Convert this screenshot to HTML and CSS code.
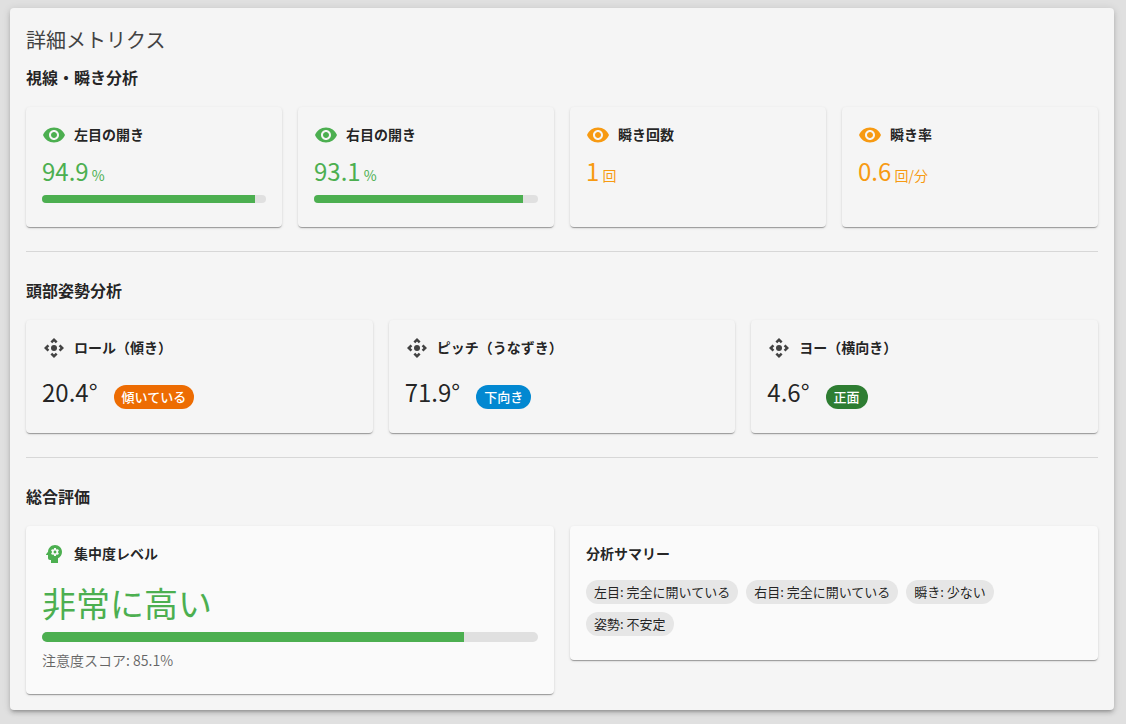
FILE: index.html
```html
<!DOCTYPE html>
<html lang="ja">
<head>
<meta charset="utf-8">
<meta name="viewport" content="width=device-width, initial-scale=1">
<title>詳細メトリクス</title>
<link rel="stylesheet" href="styles.css">
</head>
<body>
<svg class="sprite" aria-hidden="true">
  <symbol id="icon-eye" viewBox="0 0 24 24"><path d="M12 4.500C7 4.500 2.730 7.610 1 12c1.730 4.390 6 7.500 11 7.500s9.270-3.110 11-7.500c-1.730-4.390-6-7.500-11-7.500M12 17c-2.760 0-5-2.240-5-5s2.240-5 5-5 5 2.240 5 5-2.240 5-5 5m0-8c-1.660 0-3 1.340-3 3s1.340 3 3 3 3-1.340 3-3-1.340-3-3-3"/></symbol>
  <symbol id="icon-move" viewBox="0 0 24 24"><path d="M15.540 5.540 13.770 7.300 12 5.540 10.230 7.300 8.460 5.540 12 2zm2.920 10-1.760-1.770L18.460 12l-1.760-1.770 1.760-1.770L22 12zm-10 2.920 1.770-1.760L12 18.460l1.770-1.760 1.770 1.760L12 22zm-2.920-10 1.760 1.770L5.540 12l1.760 1.770-1.760 1.770L2 12z"/><circle cx="12" cy="12" r="3"/></symbol>
  <symbol id="icon-mind" viewBox="0 0 24 24"><path d="M13 8.570c-.79 0-1.430.64-1.430 1.430s.64 1.430 1.430 1.430 1.430-.64 1.430-1.430-.64-1.430-1.430-1.430"/><path d="M13 3C9.250 3 6.200 5.940 6.020 9.640L4.100 12.200c-.25.33-.01.8.4.8H6v3c0 1.100.9 2 2 2h1v3h7v-4.680c2.360-1.120 4-3.530 4-6.320 0-3.870-3.130-7-7-7m3 7c0 .13-.01.26-.02.39l.83.66c.08.06.1.16.05.25l-.8 1.390c-.05.09-.16.12-.24.09l-.99-.4c-.21.16-.43.29-.67.39L14 13.830c-.01.1-.1.17-.2.17h-1.600c-.1 0-.18-.07-.2-.17l-.15-1.060c-.25-.1-.47-.23-.68-.39l-.99.4c-.09.03-.2 0-.25-.09l-.8-1.390c-.05-.08-.03-.19.05-.25l.84-.66c-.01-.13-.02-.26-.02-.39s.02-.27.04-.39l-.85-.66c-.08-.06-.1-.16-.05-.26l.8-1.380c.05-.09.15-.12.24-.09l1 .4c.2-.15.43-.29.67-.39l.15-1.060C12.020 6.070 12.100 6 12.200 6h1.600c.1 0 .18.07.2.17l.15 1.060c.24.1.46.23.67.39l1-.4c.09-.03.2 0 .24.09l.8 1.380c.05.09.03.2-.05.26l-.85.66c.03.12.04.25.04.39"/></symbol>
</svg>
<main class="panel">
  <h1 class="panel-title">詳細メトリクス</h1>

  <section class="section">
    <h2 class="section-title">視線・瞬き分析</h2>
    <div class="grid grid-four">
      <article class="card good">
        <h3 class="card-title"><svg class="icon"><use href="#icon-eye"/></svg>左目の開き</h3>
        <p class="value">94.9<span class="unit"> %</span></p>
        <div class="bar" role="progressbar" aria-label="左目の開き" aria-valuenow="94.9"><div class="bar-fill" style="width:94.9%"></div></div>
      </article>
      <article class="card good">
        <h3 class="card-title"><svg class="icon"><use href="#icon-eye"/></svg>右目の開き</h3>
        <p class="value">93.1<span class="unit"> %</span></p>
        <div class="bar" role="progressbar" aria-label="右目の開き" aria-valuenow="93.1"><div class="bar-fill" style="width:93.1%"></div></div>
      </article>
      <article class="card warn">
        <h3 class="card-title"><svg class="icon"><use href="#icon-eye"/></svg>瞬き回数</h3>
        <p class="value">1<span class="unit"> 回</span></p>
      </article>
      <article class="card warn">
        <h3 class="card-title"><svg class="icon"><use href="#icon-eye"/></svg>瞬き率</h3>
        <p class="value">0.6<span class="unit"> 回/分</span></p>
      </article>
    </div>
  </section>

  <hr class="divider">

  <section class="section">
    <h2 class="section-title">頭部姿勢分析</h2>
    <div class="grid grid-three">
      <article class="card">
        <h3 class="card-title"><svg class="icon"><use href="#icon-move"/></svg>ロール（傾き）</h3>
        <div class="angle"><p class="angle-value">20.4°</p><span class="chip chip-orange">傾いている</span></div>
      </article>
      <article class="card">
        <h3 class="card-title"><svg class="icon"><use href="#icon-move"/></svg>ピッチ（うなずき）</h3>
        <div class="angle"><p class="angle-value">71.9°</p><span class="chip chip-blue">下向き</span></div>
      </article>
      <article class="card">
        <h3 class="card-title"><svg class="icon"><use href="#icon-move"/></svg>ヨー（横向き）</h3>
        <div class="angle"><p class="angle-value">4.6°</p><span class="chip chip-green">正面</span></div>
      </article>
    </div>
  </section>

  <hr class="divider">

  <section class="section">
    <h2 class="section-title">総合評価</h2>
    <div class="grid grid-two">
      <article class="card card-light good">
        <h3 class="card-title"><svg class="icon"><use href="#icon-mind"/></svg>集中度レベル</h3>
        <p class="level">非常に高い</p>
        <div class="bar bar-thick" role="progressbar" aria-label="集中度レベル" aria-valuenow="85.1"><div class="bar-fill" style="width:85.1%"></div></div>
        <p class="score">注意度スコア: 85.1%</p>
      </article>
      <article class="card card-light">
        <h3 class="summary-title">分析サマリー</h3>
        <ul class="chips">
          <li class="chip">左目: 完全に開いている</li>
          <li class="chip">右目: 完全に開いている</li>
          <li class="chip">瞬き: 少ない</li>
          <li class="chip">姿勢: 不安定</li>
        </ul>
      </article>
    </div>
  </section>
</main>
</body>
</html>
```
FILE: styles.css
```css
* {
  box-sizing: border-box;
}

body {
  margin: 0;
  padding: 8px 12px 14px 10px;
  background: #e0e0e0;
  color: rgba(0, 0, 0, 0.87);
  font-family: "Noto Sans CJK JP", sans-serif;
  font-size: 14px;
}

h1, h2, h3, p, ul {
  margin: 0;
  padding: 0;
}

.sprite {
  display: none;
}

.panel {
  padding: 16px;
  border-radius: 4px;
  background: #f5f5f5;
  box-shadow: 0 3px 3px -2px rgba(0, 0, 0, 0.2), 0 3px 4px rgba(0, 0, 0, 0.14), 0 1px 8px rgba(0, 0, 0, 0.12);
}

.panel-title {
  margin-bottom: 7px;
  color: #424242;
  font-size: 20px;
  font-weight: 400;
  line-height: 32px;
}

.section-title {
  margin-bottom: 16px;
  font-size: 16px;
  font-weight: 700;
  line-height: 28px;
}

.divider {
  height: 1px;
  margin: 24px 0;
  border: 0;
  background: rgba(0, 0, 0, 0.12);
}

.grid {
  display: grid;
  gap: 16px;
}

.grid-four {
  grid-template-columns: repeat(4, 1fr);
}

.grid-three {
  grid-template-columns: repeat(3, 1fr);
}

.grid-two {
  grid-template-columns: repeat(2, 1fr);
  align-items: start;
}

.card {
  padding: 16px 16px 24px;
  border-radius: 4px;
  background: #f5f5f5;
  box-shadow: 0 2px 1px -1px rgba(0, 0, 0, 0.2), 0 1px 1px rgba(0, 0, 0, 0.14), 0 1px 3px rgba(0, 0, 0, 0.12);
}

.card-light {
  background: #fafafa;
}

.good {
  --accent: #4caf50;
}

.warn {
  --accent: #f79a12;
}

.card-title {
  display: flex;
  align-items: flex-start;
  gap: 8px;
  font-size: 14px;
  font-weight: 700;
  line-height: 22px;
}

.icon {
  width: 24px;
  height: 24px;
  fill: var(--accent, #424242);
}

.value {
  margin: 8px 0;
  color: var(--accent);
  font-size: 24px;
  line-height: 32px;
}

.unit {
  font-size: 14px;
  line-height: 20px;
}

.bar {
  height: 8px;
  overflow: hidden;
  border-radius: 4px;
  background: #e0e0e0;
}

.bar-thick {
  height: 10px;
  border-radius: 5px;
}

.bar-fill {
  height: 100%;
  background: #4caf50;
}

.angle {
  display: flex;
  align-items: flex-end;
  gap: 16px;
  margin-top: 16px;
}

.angle-value {
  padding-bottom: 1px;
  font-size: 24px;
  line-height: 32px;
}

.chip {
  padding: 0 8px;
  border-radius: 12px;
  background: #e6e6e6;
  font-size: 13px;
  line-height: 24px;
}

.chip-orange,
.chip-blue,
.chip-green {
  color: #fff;
  font-weight: 500;
}

.chip-orange {
  background: #ed6c02;
}

.chip-blue {
  background: #0288d1;
}

.chip-green {
  background: #2e7d32;
}

.level {
  margin: 16px 0 8px;
  color: var(--accent);
  font-size: 34px;
  line-height: 42px;
}

.score {
  margin-top: 8px;
  color: rgba(0, 0, 0, 0.6);
  line-height: 20px;
}

.summary-title {
  font-size: 14px;
  font-weight: 700;
  line-height: 22px;
}

.chips {
  display: flex;
  flex-wrap: wrap;
  gap: 8px;
  margin-top: 16px;
  list-style: none;
}
```
